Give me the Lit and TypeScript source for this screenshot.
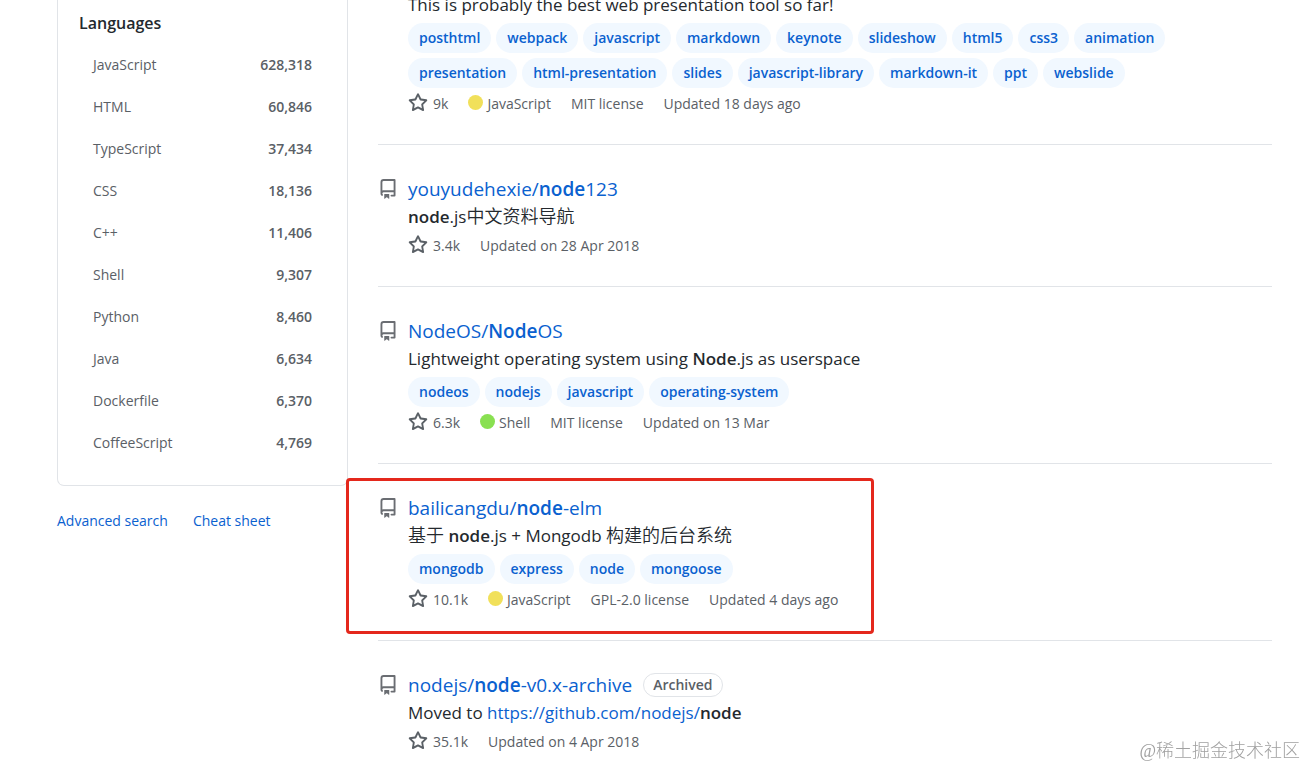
import { LitElement, html, css, nothing, type TemplateResult } from "lit";
import { customElement, property } from "lit/decorators.js";

interface Repo {
  owner?: string;
  name?: TemplateResult;
  archived?: boolean;
  description: TemplateResult;
  topics?: string[];
  stars: string;
  language?: string;
  color?: string;
  license?: string;
  updated: string;
  marked?: boolean;
}

const LANGUAGES: [string, string][] = [
  ["JavaScript", "628,318"],
  ["HTML", "60,846"],
  ["TypeScript", "37,434"],
  ["CSS", "18,136"],
  ["C++", "11,406"],
  ["Shell", "9,307"],
  ["Python", "8,460"],
  ["Java", "6,634"],
  ["Dockerfile", "6,370"],
  ["CoffeeScript", "4,769"],
];

const REPOS: Repo[] = [
  {
    description: html`This is probably the best web presentation tool so far!`,
    topics: [
      "posthtml", "webpack", "javascript", "markdown", "keynote", "slideshow", "html5", "css3", "animation",
      "presentation", "html-presentation", "slides", "javascript-library", "markdown-it", "ppt", "webslide",
    ],
    stars: "9k",
    language: "JavaScript",
    color: "#f1e05a",
    license: "MIT license",
    updated: "Updated 18 days ago",
  },
  {
    owner: "youyudehexie",
    name: html`<b>node</b>123`,
    description: html`<b>node</b>.js<span class="zh" lang="zh">中文资料导航</span>`,
    stars: "3.4k",
    updated: "Updated on 28 Apr 2018",
  },
  {
    owner: "NodeOS",
    name: html`<b>Node</b>OS`,
    description: html`Lightweight operating system using <b>Node</b>.js as userspace`,
    topics: ["nodeos", "nodejs", "javascript", "operating-system"],
    stars: "6.3k",
    language: "Shell",
    color: "#89e051",
    license: "MIT license",
    updated: "Updated on 13 Mar",
  },
  {
    owner: "bailicangdu",
    name: html`<b>node</b>-elm`,
    description: html`<span class="zh" lang="zh">基于</span> <b>node</b>.js + Mongodb <span class="zh" lang="zh">构建的后台系统</span>`,
    topics: ["mongodb", "express", "node", "mongoose"],
    stars: "10.1k",
    language: "JavaScript",
    color: "#f1e05a",
    license: "GPL-2.0 license",
    updated: "Updated 4 days ago",
    marked: true,
  },
  {
    owner: "nodejs",
    name: html`<b>node</b>-v0.x-archive`,
    archived: true,
    description: html`Moved to <a href="#">https://github.com/nodejs/</a><b>node</b>`,
    stars: "35.1k",
    updated: "Updated on 4 Apr 2018",
  },
];

const repoIcon = html`<svg class="repo-icon" viewBox="0 0 16 16" aria-hidden="true">
  <path fill-rule="evenodd" d="M2 2.5A2.5 2.5 0 014.5 0h8.75a.75.75 0 01.75.75v12.5a.75.75 0 01-.75.75h-2.5a.75.75 0 110-1.5h1.75v-2h-8a1 1 0 00-.714 1.7.75.75 0 01-1.072 1.05A2.495 2.495 0 012 11.5v-9zm10.5-1V9h-8c-.356 0-.694.074-1 .208V2.5a1 1 0 011-1h8zM5 12.25v3.25a.25.25 0 00.4.2l1.45-1.087a.25.25 0 01.3 0L8.6 15.7a.25.25 0 00.4-.2v-3.25a.25.25 0 00-.25-.25h-3.5a.25.25 0 00-.25.25z"></path>
</svg>`;

const starIcon = html`<svg class="star-icon" viewBox="0 0 16 16" aria-hidden="true">
  <path fill-rule="evenodd" d="M8 .25a.75.75 0 01.673.418l1.882 3.815 4.21.612a.75.75 0 01.416 1.279l-3.046 2.97.719 4.192a.75.75 0 01-1.088.791L8 12.347l-3.766 1.98a.75.75 0 01-1.088-.79l.72-4.194L.818 6.374a.75.75 0 01.416-1.28l4.21-.611L7.327.668A.75.75 0 018 .25zm0 2.445L6.615 5.5a.75.75 0 01-.564.41l-3.097.45 2.24 2.184a.75.75 0 01.216.664l-.528 3.084 2.769-1.456a.75.75 0 01.698 0l2.77 1.456-.53-3.084a.75.75 0 01.216-.664l2.24-2.183-3.096-.45a.75.75 0 01-.564-.41L8 2.694v.001z"></path>
</svg>`;

@customElement("language-menu")
class LanguageMenu extends LitElement {
  static styles = css`
    :host { display: block; }
    .box { border: 1px solid #e1e4e8; border-top: 0; border-radius: 0 0 7px 7px; padding: 18px 21px 21px; }
    h2 { margin: 0 0 8px; font-size: 16px; line-height: 26px; font-weight: 600; color: #24292e; }
    ul { list-style: none; margin: 0; padding: 0; }
    .row { display: flex; justify-content: space-between; padding: 10px 14px; line-height: 22px; color: #5a6066; text-decoration: none; }
    .count { font-weight: 600; }
    .links { display: flex; gap: 25px; margin-top: 24px; line-height: 22px; }
    .links a { color: #0a61cf; text-decoration: none; }
  `;
  render() {
    return html`
      <div class="box">
        <h2>Languages</h2>
        <ul>
          ${LANGUAGES.map(([name, count]) => html`<li><a class="row" href="#"><span>${name}</span><span class="count">${count}</span></a></li>`)}
        </ul>
      </div>
      <div class="links"><a href="#">Advanced search</a><a href="#">Cheat sheet</a></div>
    `;
  }
}

@customElement("repo-item")
class RepoItem extends LitElement {
  @property({ attribute: false }) repo!: Repo;
  static styles = css`
    :host { display: block; }
    .item { position: relative; display: flex; gap: 10px; }
    .side { width: 20px; flex: none; padding-top: 5px; }
    .repo-icon { display: block; width: 20px; height: 20px; fill: #6a6d72; }
    .body { flex: 1; min-width: 0; }
    a { color: #0a61cf; text-decoration: none; }
    b { font-weight: 600; }
    .zh { font-size: 18px; line-height: 18px; font-weight: 350; }
    h3 { display: flex; align-items: center; gap: 11px; margin: 0; font-size: 19px; line-height: 30px; font-weight: 400; }
    .badge { box-sizing: border-box; height: 24px; border: 1px solid #e1e4e8; border-radius: 12px; padding: 0 9px; font-size: 14px; line-height: 22px; font-weight: 600; color: #5a6066; }
    p { margin: 0 0 5px; font-size: 17px; line-height: 26px; color: #24292e; }
    .topics { display: flex; flex-wrap: wrap; gap: 5px; margin-bottom: 5px; }
    .topic { padding: 0 11px; border-radius: 15px; background: #f1f8ff; line-height: 30px; font-weight: 600; }
    .meta { display: flex; flex-wrap: wrap; gap: 0 20px; line-height: 22px; color: #5a6066; }
    .meta span, .stars { display: flex; align-items: flex-start; }
    .stars { gap: 5px; color: #5a6066; }
    .star-icon { width: 20px; height: 20px; fill: #5a6066; }
    .dot { width: 15px; height: 15px; margin: 2px 4px 0 0; border-radius: 50%; }
    .mark { position: absolute; left: -32px; top: -15px; box-sizing: border-box; width: 528px; height: 156px; border: 3px solid #e4281c; border-radius: 4px; pointer-events: none; }
  `;
  render() {
    const r = this.repo;
    return html`<article class="item">
      <div class="side">${r.owner ? repoIcon : nothing}</div>
      <div class="body">
        ${r.owner ? html`<h3><a href="#">${r.owner}/${r.name}</a>${r.archived ? html`<span class="badge">Archived</span>` : nothing}</h3>` : nothing}
        <p>${r.description}</p>
        ${r.topics ? html`<div class="topics">${r.topics.map((t) => html`<a class="topic" href="#">${t}</a>`)}</div>` : nothing}
        <div class="meta">
          <a class="stars" href="#">${starIcon}${r.stars}</a>
          ${r.language ? html`<span><i class="dot" style="background:${r.color}"></i>${r.language}</span>` : nothing}
          ${r.license ? html`<span>${r.license}</span>` : nothing}
          <span>${r.updated}</span>
        </div>
      </div>
      ${r.marked ? html`<div class="mark"></div>` : nothing}
    </article>`;
  }
}

@customElement("app-root")
class AppRoot extends LitElement {
  static styles = css`
    :host { display: block; height: 100vh; overflow: hidden; background: #fff; font-family: "Open Sans", "Noto Sans CJK SC", sans-serif; font-size: 14px; }
    .page { display: flex; align-items: flex-start; gap: 30px; margin-top: -8px; padding: 0 34px 0 57px; }
    language-menu { flex: 0 0 291px; }
    main { flex: 1; min-width: 0; }
    repo-item { padding: 29px 0; border-bottom: 1px solid #e1e4e8; }
    repo-item:first-child { padding-top: 0; }
    repo-item:last-child { border-bottom: 0; }
    .watermark { position: fixed; right: 6px; bottom: 3px; font-family: "Liberation Serif", "Noto Sans CJK SC", serif; font-size: 18px; line-height: 26px; font-weight: 300; color: #a0a0a0; }
  `;
  render() {
    return html`
      <div class="page">
        <language-menu></language-menu>
        <main>${REPOS.map((r) => html`<repo-item .repo=${r}></repo-item>`)}</main>
      </div>
      <div class="watermark">@稀土掘金技术社区</div>
    `;
  }
}
